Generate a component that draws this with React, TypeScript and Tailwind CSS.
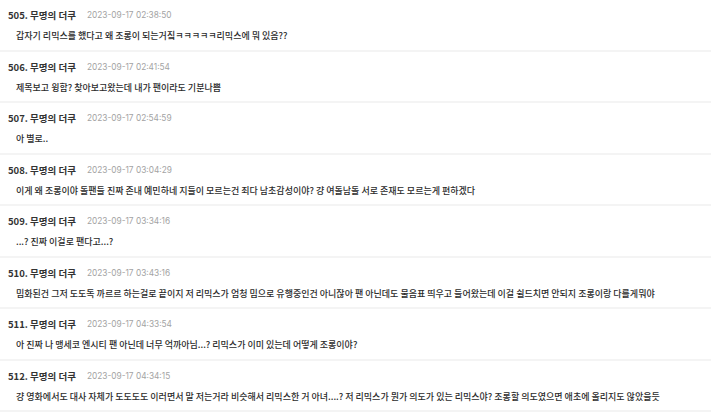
const comments = [
  { no: 505, time: "2023-09-17 02:38:50", text: "갑자기 리믹스를 했다고 왜 조롱이 되는거짘ㅋㅋㅋㅋㅋ리믹스에 뭐 있음??" },
  { no: 506, time: "2023-09-17 02:41:54", text: "제목보고 윙함? 찾아보고왔는데 내가 팬이라도 기분나쁨" },
  { no: 507, time: "2023-09-17 02:54:59", text: "아 별로.." },
  { no: 508, time: "2023-09-17 03:04:29", text: "이게 왜 조롱이야 돌팬들 진짜 존내 예민하네 지들이 모르는건 죄다 남초감성이야? 걍 여돌남돌 서로 존재도 모르는게 편하겠다" },
  { no: 509, time: "2023-09-17 03:34:16", text: "...? 진짜 이걸로 팬다고...?" },
  { no: 510, time: "2023-09-17 03:43:16", text: "밈화된건 그저 도도독 까르르 하는걸로 끝이지 저 리믹스가 엄청 밈으로 유행중인건 아니잖아 팬 아닌데도 물음표 띄우고 들어왔는데 이걸 쉴드치면 안되지 조롱이랑 다를게뭐야" },
  { no: 511, time: "2023-09-17 04:33:54", text: "아 진짜 나 맹세코 엔시티 팬 아닌데 너무 억까아님...? 리믹스가 이미 있는데 어떻게 조롱이야?" },
  { no: 512, time: "2023-09-17 04:34:15", text: "걍 영화에서도 대사 자체가 도도도도 이러면서 말 저는거라 비슷해서 리믹스한 거 아녀....? 저 리믹스가 뭔가 의도가 있는 리믹스야? 조롱할 의도였으면 애초에 올리지도 않았을듯" },
];

export default function App() {
  return (
    <div className="w-[720px] h-[412px] overflow-hidden bg-white font-['Noto_Sans_CJK_KR',sans-serif] text-[#333]">
      {comments.map((c, i) => (
        <div key={c.no} className={i % 2 === 0 ? "h-[52px] pr-[9px]" : "h-[51px] pr-[9px]"}>
          <div className={i % 2 === 0 ? "h-[50px] pt-[8px] pl-[8px]" : "h-[49px] pt-[8px] pl-[8px]"}>
            <div className="flex items-center h-[14px]">
              <span className="text-[9.5px] font-bold text-[#333] w-[79px]">{c.no}. 무명의 더쿠</span>
              <span className="text-[8.3px] text-[#a3a3a3] font-['Inter',sans-serif]">{c.time}</span>
            </div>
            <div className="mt-[7px] pl-[8px] h-[14px] flex items-center text-[9px] font-medium text-[#2b2b2b] whitespace-nowrap">{c.text}</div>
          </div>
          <div className="h-[2px] bg-[#f4f4f4]" />
        </div>
      ))}
    </div>
  );
}
